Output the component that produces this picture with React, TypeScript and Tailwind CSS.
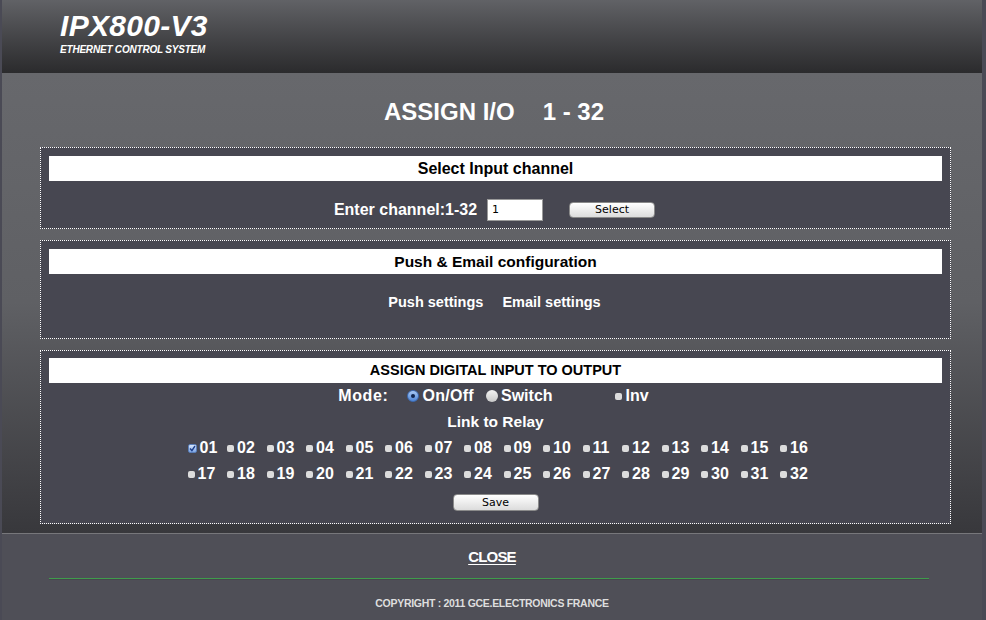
import React from "react";

const F = { fontFamily: '"Liberation Sans", Arial, sans-serif' };

function Box({ checked = false }: { checked?: boolean }) {
  if (checked) {
    return (
      <span className="inline-flex h-[9px] w-[9px] items-center justify-center rounded-[2px] border border-[#5b7fb8] bg-gradient-to-b from-[#d8e6fb] to-[#7da6e6]">
        <svg width="7" height="7" viewBox="0 0 7 7">
          <path d="M1 3.6 L2.9 5.6 L6 1" stroke="#1d3f8a" strokeWidth="1.4" fill="none" />
        </svg>
      </span>
    );
  }
  return <span className="inline-block h-[7px] w-[7px] rounded-[2px] bg-[#dcdcdc]" />;
}

function Radio({ checked = false }: { checked?: boolean }) {
  if (checked) {
    return (
      <span className="inline-flex h-[12px] w-[12px] items-center justify-center rounded-full bg-gradient-to-b from-[#a9c9f3] to-[#4f86d6] border border-[#3d6bb3]">
        <span className="h-[4px] w-[4px] rounded-full bg-[#10254d]" />
      </span>
    );
  }
  return <span className="inline-block h-[12px] w-[12px] rounded-full bg-gradient-to-b from-[#f2f2f2] to-[#c8c8c8]" />;
}

function SectionBar({ children, size }: { children: React.ReactNode; size: string }) {
  return (
    <div className={"flex h-[25px] items-center justify-center bg-white font-bold text-black " + size}>
      {children}
    </div>
  );
}

export default function App() {
  const row1 = Array.from({ length: 16 }, (_, i) => i + 1);
  const row2 = Array.from({ length: 16 }, (_, i) => i + 17);
  const pad = (n: number) => (n < 10 ? "0" + n : String(n));
  return (
    <div className="flex h-[620px] w-[986px] overflow-hidden bg-[#4a4a55]" style={F}>
      <div className="ml-[2px] flex w-[980px] flex-col">
        {/* Header */}
        <div className="h-[73px] shrink-0 bg-gradient-to-b from-[#616266] to-[#2b2b2d] pl-[58px] pt-[9px] text-white">
          <div className="text-[30px] font-bold italic leading-[34px] tracking-[0.3px]">IPX800-V3</div>
          <div className="mt-[1px] text-[10px] font-bold italic leading-[11px] tracking-[-0.2px]">ETHERNET CONTROL SYSTEM</div>
        </div>

        {/* Main */}
        <div className="flex h-[460px] shrink-0 flex-col bg-gradient-to-b from-[#67686c] via-[#5f6064] to-[#38383c]">
          <div className="flex h-[74px] items-center justify-center pt-[4px] pl-[4px] text-[24px] font-bold text-white">
            <span>ASSIGN I/O</span>
            <span className="ml-[28px]">1 - 32</span>
          </div>

          {/* Section 1 */}
          <div className="ml-[38px] w-[911px] border border-dotted border-white bg-[#474751] px-[8px] pt-[8px]">
            <SectionBar size="text-[16px]">Select Input channel</SectionBar>
            <div className="mt-[18px] mb-[7px] flex h-[22px] items-center justify-center pr-[2px]">
              <span className="text-[16px] font-bold text-white">Enter channel:1-32</span>
              <div className="ml-[10px] flex h-[22px] w-[56px] items-center border border-[#9a9a9a] bg-white pl-[4px] text-[11px] text-black" style={{ fontFamily: '"DejaVu Sans", sans-serif' }}>
                1
              </div>
              <button className="ml-[26px] h-[16px] w-[86px] rounded-[4px] border border-[#8a8a8a] bg-gradient-to-b from-white to-[#dcdcdc] text-[11px] leading-[14px] text-black" style={{ fontFamily: '"DejaVu Sans", sans-serif' }}>
                Select
              </button>
            </div>
          </div>

          {/* Section 2 */}
          <div className="ml-[38px] mt-[11px] w-[911px] border border-dotted border-white bg-[#474751] px-[8px] pt-[8px]">
            <SectionBar size="text-[15.5px]">Push &amp; Email configuration</SectionBar>
            <div className="mt-[19px] mb-[25px] flex h-[20px] items-center justify-center pr-[2px] text-[14.5px] font-bold text-white">
              <span>Push settings</span>
              <span className="ml-[19px]">Email settings</span>
            </div>
          </div>

          {/* Section 3 */}
          <div className="ml-[38px] mt-[11px] w-[911px] border border-dotted border-white bg-[#474751] px-[8px] pt-[7px]">
            <SectionBar size="text-[14.5px]">ASSIGN DIGITAL INPUT TO OUTPUT</SectionBar>
            <div className="flex h-[26px] items-center justify-center pr-[4px] text-[16px] font-bold text-white">
              <span className="tracking-[0.6px]">Mode:</span>
              <span className="ml-[19px] flex items-center gap-[3px]">
                <Radio checked />
                <span className="tracking-[0.3px]">On/Off</span>
              </span>
              <span className="ml-[12px] flex items-center gap-[3px]">
                <Radio />
                <span>Switch</span>
              </span>
              <span className="ml-[62px] flex items-center gap-[4px]">
                <Box />
                <span>Inv</span>
              </span>
            </div>
            <div className="flex h-[26px] items-center justify-center text-[15.5px] font-bold text-white">Link to Relay</div>
            {[row1, row2].map((row, ri) => (
              <div key={ri} className="flex h-[26px] items-center justify-center pl-[16px] text-[16px] font-bold text-white">
                {row.map((n) => (
                  <span key={n} className="flex w-[39.5px] items-center gap-[3px]">
                    <Box checked={n === 1} />
                    <span>{pad(n)}</span>
                  </span>
                ))}
              </div>
            ))}
            <div className="mt-[7px] mb-[12px] flex justify-center">
              <button className="h-[17px] w-[86px] rounded-[4px] border border-[#8a8a8a] bg-gradient-to-b from-white to-[#dcdcdc] text-[11px] leading-[15px] text-black" style={{ fontFamily: '"DejaVu Sans", sans-serif' }}>
                Save
              </button>
            </div>
          </div>
        </div>

        {/* Footer */}
        <div className="flex flex-1 flex-col items-center border-t border-[#77777b] bg-[#4f4f57]">
          <div className="mt-[14px] text-[15px] font-bold leading-[18px] tracking-[-0.8px] text-white underline underline-offset-2">
            CLOSE
          </div>
          <div className="mt-[12px] ml-[-6px] h-[1px] w-[880px] bg-[#3f9c4b]" />
          <div className="ml-[-6px] h-[1px] w-[880px] bg-[#46464d]" />
          <div className="mt-[16px] text-[10.5px] font-bold tracking-[-0.3px] text-[#dedede]">
            COPYRIGHT : 2011 GCE.ELECTRONICS FRANCE
          </div>
        </div>
      </div>
    </div>
  );
}
